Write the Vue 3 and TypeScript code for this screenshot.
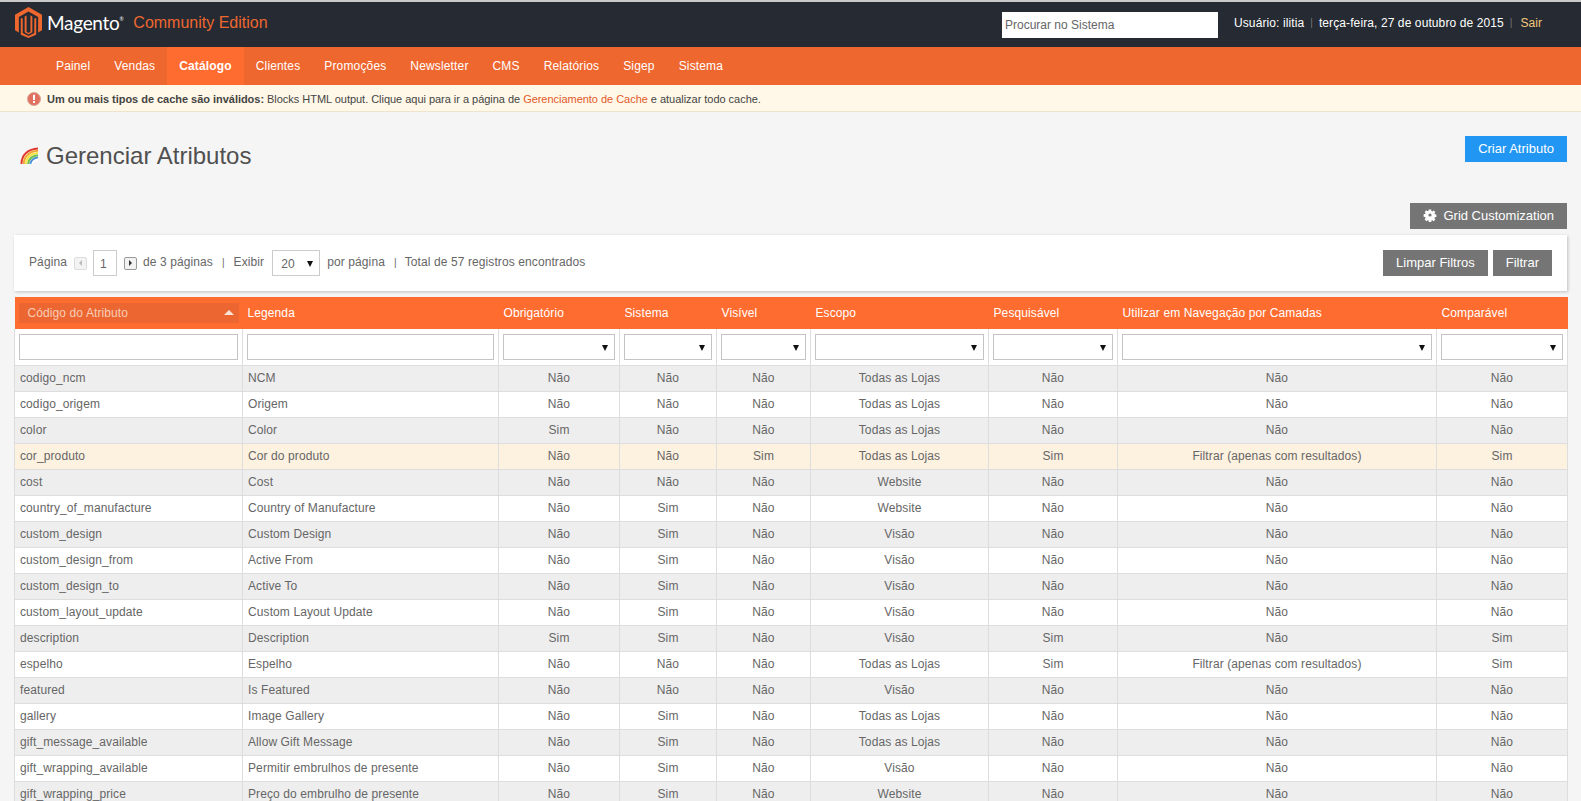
<script setup lang="ts">
interface Row { code: string; label: string; req: string; sys: string; vis: string; scope: string; search: string; layered: string; comp: string; hl?: boolean }
const N = 'Não', S = 'Sim', T = 'Todas as Lojas', W = 'Website', V = 'Visão', F = 'Filtrar (apenas com resultados)'
const r = (code: string, label: string, req: string, sys: string, vis: string, scope: string, search = N, layered = N, comp = N, hl = false): Row =>
  ({ code, label, req, sys, vis, scope, search, layered, comp, hl })
const rows: Row[] = [
  r('codigo_ncm', 'NCM', N, N, N, T),
  r('codigo_origem', 'Origem', N, N, N, T),
  r('color', 'Color', S, N, N, T),
  r('cor_produto', 'Cor do produto', N, N, S, T, S, F, S, true),
  r('cost', 'Cost', N, N, N, W),
  r('country_of_manufacture', 'Country of Manufacture', N, S, N, W),
  r('custom_design', 'Custom Design', N, S, N, V),
  r('custom_design_from', 'Active From', N, S, N, V),
  r('custom_design_to', 'Active To', N, S, N, V),
  r('custom_layout_update', 'Custom Layout Update', N, S, N, V),
  r('description', 'Description', S, S, N, V, S, N, S),
  r('espelho', 'Espelho', N, N, N, T, S, F, S),
  r('featured', 'Is Featured', N, N, N, V),
  r('gallery', 'Image Gallery', N, S, N, T),
  r('gift_message_available', 'Allow Gift Message', N, S, N, T),
  r('gift_wrapping_available', 'Permitir embrulhos de presente', N, S, N, V),
  r('gift_wrapping_price', 'Preço do embrulho de presente', N, S, N, W)
]
const nav = ['Painel', 'Vendas', 'Catálogo', 'Clientes', 'Promoções', 'Newsletter', 'CMS', 'Relatórios', 'Sigep', 'Sistema']
const cols = [228, 256, 121, 97, 94, 178, 129, 319, 131]
const heads = ['Legenda', 'Obrigatório', 'Sistema', 'Visível', 'Escopo', 'Pesquisável', 'Utilizar em Navegação por Camadas', 'Comparável']
</script>

<template>
  <div class="page">
    <header class="top">
      <div class="brand">
        <svg class="logo" width="27" height="31" viewBox="0 0 28 32">
          <path fill="#ee672f" d="M14 0 28 8v16l-4 2.300V10.300L14 4.600 4 10.300v16L0 24V8z" />
          <path fill="#ee672f" d="M14 7.500 18 9.800V26l-4 2.400-4-2.400V9.800l2-1.100v17l2 1.200 2-1.200v-17z" />
          <path fill="#ee672f" d="M6 11v17.600L14 32l8-3.400V11l-2 1.100V27l-6 3-6-3V12.100z" />
        </svg>
        <span class="wordmark">Magento<sup>®</sup></span>
        <span class="edition">Community Edition</span>
      </div>
      <input class="search" placeholder="Procurar no Sistema" />
      <div class="user">
        <span>Usuário: ilitia</span><i>|</i><span>terça-feira, 27 de outubro de 2015</span><i>|</i><a>Sair</a>
      </div>
    </header>

    <nav class="nav">
      <a v-for="n in nav" :key="n" :class="{ active: n === 'Catálogo' }">{{ n }}</a>
    </nav>

    <div class="notice">
      <svg width="14" height="14" viewBox="0 0 14 14">
        <circle cx="7" cy="7" r="6.500" fill="#e2705f" stroke="#d9a79c" />
        <rect x="6" y="2.800" width="2" height="5.200" fill="#fff" />
        <rect x="6" y="9" width="2" height="2" fill="#fff" />
      </svg>
      <p><b>Um ou mais tipos de cache são inválidos:</b> Blocks HTML output. Clique aqui para ir a página de <a>Gerenciamento de Cache</a> e atualizar todo cache.</p>
    </div>

    <main class="main">
      <div class="title-row">
        <h1>
          <svg width="19" height="18" viewBox="0 0 19 18" fill="none" stroke-width="2">
            <path stroke="#e23b32" d="M1.500 17C1.500 8 8 2 18 1.500" />
            <path stroke="#f2a531" d="M3.800 17C3.800 9.500 9.500 4.200 18 3.700" />
            <path stroke="#f5e34a" d="M6 17C6 11 10.500 6.500 18 6" />
            <path stroke="#6cbf4b" d="M8.200 17C8.200 12.500 12 8.600 18 8.200" />
            <path stroke="#4a90d9" d="M10.400 17C10.400 14 13.500 10.800 18 10.400" />
            <path stroke="#fff" d="M12.600 17C12.600 15 15 13 18 12.600" />
          </svg>
          Gerenciar Atributos
        </h1>
        <button class="btn blue">Criar Atributo</button>
      </div>

      <div class="grid-custom">
        <button class="btn gray">
          <svg width="14" height="14" viewBox="0 0 14 14">
            <path fill="#fff" fill-rule="evenodd" d="M5.500 0h3l.3 2 1.200.5 1.600-1.200 2.100 2.100-1.200 1.600.5 1.200 2 .3v3l-2 .3-.5 1.200 1.200 1.600-2.100 2.100-1.600-1.200-1.200.5-.3 2h-3l-.3-2-1.200-.5-1.600 1.200L.300 12.300l1.200-1.600-.5-1.200-2-.3v-3l2-.3.5-1.200L.300 3.100 2.400 1l1.600 1.200 1.200-.5zM7 5a2 2 0 1 0 0 4 2 2 0 0 0 0-4z" transform="translate(1.400 1.400) scale(.8)" />
          </svg>
          Grid Customization
        </button>
      </div>

      <section class="toolbar">
        <div class="pager">
          <span class="txt">Página</span>
          <span class="arrow off"><b class="tri left"></b></span>
          <span class="page-box">1</span>
          <span class="arrow"><b class="tri right"></b></span>
          <span class="txt">de 3 páginas</span>
          <span class="txt sep">|</span>
          <span class="txt">Exibir</span>
          <span class="page-size">20<b class="caret"></b></span>
          <span class="txt">por página</span>
          <span class="txt sep last">|</span>
          <span class="txt">Total de 57 registros encontrados</span>
        </div>
        <div class="actions">
          <button class="btn gray">Limpar Filtros</button>
          <button class="btn gray">Filtrar</button>
        </div>
      </section>

      <table class="grid">
        <colgroup>
          <col v-for="(c, i) in cols" :key="i" :style="{ width: c + 'px' }" />
        </colgroup>
        <thead>
          <tr class="heads">
            <th class="sorted-cell"><span class="sorted">Código do Atributo<b class="up"></b></span></th>
            <th v-for="h in heads" :key="h">{{ h }}</th>
          </tr>
          <tr class="filters">
            <th><input class="field" /></th>
            <th><input class="field" /></th>
            <th v-for="i in 7" :key="i"><span class="field sel"><b class="caret"></b></span></th>
          </tr>
        </thead>
        <tbody>
          <tr v-for="(row, i) in rows" :key="row.code" :class="{ odd: i % 2 === 0, hl: row.hl }">
            <td class="l">{{ row.code }}</td>
            <td class="l">{{ row.label }}</td>
            <td>{{ row.req }}</td>
            <td>{{ row.sys }}</td>
            <td>{{ row.vis }}</td>
            <td>{{ row.scope }}</td>
            <td>{{ row.search }}</td>
            <td>{{ row.layered }}</td>
            <td>{{ row.comp }}</td>
          </tr>
        </tbody>
      </table>
    </main>
  </div>
</template>

<style>
html, body { margin: 0; overflow: hidden; height: 100%; background: #f5f5f5; }
</style>

<style scoped>
.page { font-family: "Liberation Sans", Arial, sans-serif; font-size: 12px; color: #676056; height: 801px; overflow: hidden; background: #f5f5f5; }
.top { height: 45px; border-top: 2px solid #c9c9c9; background: #262a32; display: flex; align-items: flex-start; }
.brand { display: flex; align-items: center; padding: 5px 0 0 15px; width: 1002px; box-sizing: border-box; }
.logo { flex: none; }
.wordmark { font-family: Lato, "Open Sans", sans-serif; font-size: 19px; color: #fff; margin-left: 5px; letter-spacing: -.3px; }
.wordmark sup { font-size: 5px; vertical-align: 9px; }
.edition { font-size: 16px; color: #ee672f; margin-left: 10px; }
.search { width: 216px; height: 26px; margin: 10px 0 0; border: 0; padding: 0 3px; box-sizing: border-box; background: #fff; font: 12px "Liberation Sans", Arial, sans-serif; border-radius: 0; outline: 0; }
.search::placeholder { color: #666; opacity: 1; }
.user { color: #fff; margin: 14px 0 0 16px; line-height: 14px; display: flex; font-size: 12px; letter-spacing: .1px; }
.user i { font-style: normal; color: #777; margin: 0 6px; font-size: 10px; }
.user a { color: #f2c87c; margin-left: 2px; }
.nav { height: 38px; background: #ee672f; padding-left: 44px; display: flex; }
.nav a { padding: 0 12px; line-height: 38px; color: #fff; font-size: 12px; letter-spacing: .15px; }
.nav a.active { background: #ff6c2f; font-weight: 700; }
.notice { height: 25px; padding-top: 1px; background: #fff8e8; border-bottom: 1px solid #eee3cc; display: flex; align-items: center; padding-left: 27px; gap: 6px; font-size: 11px; color: #444; letter-spacing: -.03px; }
.notice p { margin: 0; }
.notice a { color: #e2592a; }
.main { padding: 0 14px; }
.title-row { display: flex; justify-content: space-between; align-items: flex-start; padding-top: 24px; height: 67px; }
.title-row h1 { margin: 6px 0 0 6px; font-weight: 400; font-size: 24px; line-height: 28px; color: #505050; display: flex; align-items: center; gap: 7px; }
.btn { border: 0; height: 26px; padding: 0 13px 2px; box-sizing: border-box; color: #fff; font: 13px "Liberation Sans", Arial, sans-serif; border-radius: 0; display: inline-flex; align-items: center; }
.blue { background: #2196f3; }
.gray { background: #757575; }
.grid-custom { display: flex; justify-content: flex-end; height: 32px; }
.grid-custom .btn { gap: 6px; }
.toolbar { height: 56px; background: #fff; box-shadow: 1px 1px 3px rgba(0, 0, 0, .22); display: flex; align-items: center; justify-content: space-between; padding: 0 15px; margin-bottom: 6px; }
.pager { display: flex; align-items: center; gap: 6px; color: #666; font-size: 12px; letter-spacing: .1px; }
.txt { margin-bottom: 2px; }
.arrow { width: 11px; height: 11px; border: 1px solid #9a9a9a; border-radius: 2px; background: #f3f3f3; display: flex; align-items: center; justify-content: center; margin-left: 1px; }
.arrow.off { border-color: #ddd; }
.tri { width: 0; height: 0; border: 3px solid transparent; }
.tri.left { border-right-color: #bbb; border-left-width: 0; }
.tri.right { border-left-color: #333; border-right-width: 0; }
.page-box { width: 24px; height: 26px; border: 1px solid #ccc; box-sizing: border-box; padding: 6px 0 0 6px; color: #666; }
.page-size { width: 48px; height: 26px; border: 1px solid #ccc; box-sizing: border-box; padding: 6px 0 0 8px; position: relative; margin: 0 1px 0 2px; }
.sep { margin-left: 3px; margin-right: 3px; font-size: 10px; }
.sep.last { margin-right: 2px; }
.caret { position: absolute; right: 6px; top: 10px; width: 0; height: 0; border-left: 3px solid transparent; border-right: 3px solid transparent; border-top: 6px solid #111; }
.actions { display: flex; gap: 5px; }
.grid { table-layout: fixed; border-collapse: collapse; width: 1553px; letter-spacing: .1px; }
.heads th { height: 32px; padding: 0 5px; background: #ff6c30; color: #fff; font-weight: 400; text-align: left; font-size: 12px; }
.heads th.sorted-cell { padding: 0 4px; }
.sorted { display: block; position: relative; height: 20px; line-height: 20px; padding-left: 9px; background: #ec6632; color: #f8cdb6; }
.up { position: absolute; right: 5px; top: 7px; width: 0; height: 0; border-left: 5px solid transparent; border-right: 5px solid transparent; border-bottom: 5px solid #fbe3d6; }
.filters th { height: 36px; padding: 0 4px; background: #fff; border: 1px solid #ddd; border-top: 0; box-sizing: border-box; font-weight: 400; }
.field { display: block; width: 100%; height: 26px; box-sizing: border-box; border: 1px solid #c4c4c4; background: #fff; padding: 0; border-radius: 0; position: relative; outline: 0; }
td { height: 26px; padding: 0 5px; box-sizing: border-box; border: 1px solid #ddd; text-align: center; color: #666; background: #fff; font-size: 12px; white-space: nowrap; overflow: hidden; }
td.l { text-align: left; }
tr.odd td { background: #eee; }
tr.hl td { background: #fdf1e0; }
</style>
